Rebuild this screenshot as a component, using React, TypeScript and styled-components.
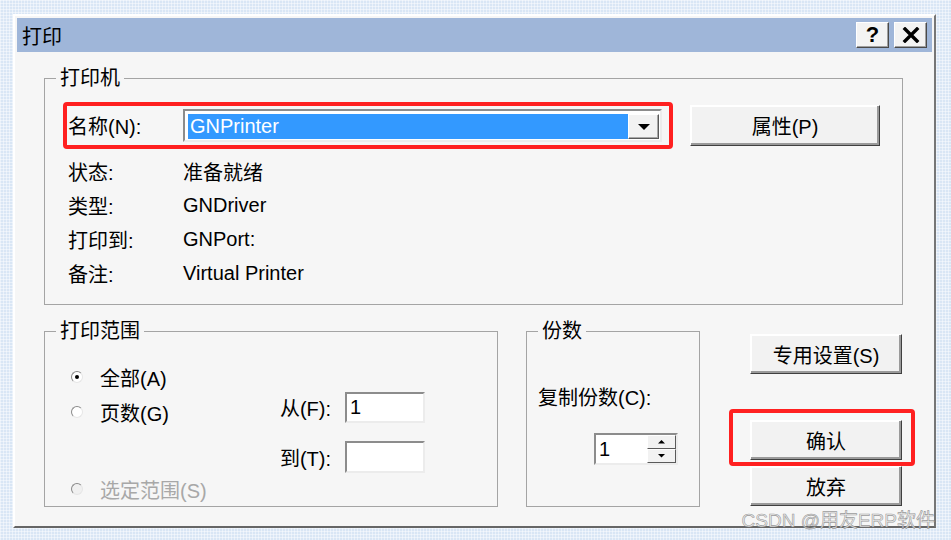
import React from "react";
import styled, { createGlobalStyle } from "styled-components";

const GlobalStyle = createGlobalStyle`
  html, body { margin: 0; padding: 0; }
  body {
    width: 951px;
    height: 540px;
    overflow: hidden;
    background-color: #d9e6f5;
    background-image:
      linear-gradient(rgba(255,255,255,0.45) 1px, transparent 1px),
      linear-gradient(90deg, rgba(255,255,255,0.45) 1px, transparent 1px);
    background-size: 3px 3px;
    font-family: "Liberation Sans", "Noto Sans CJK SC", sans-serif;
    color: #111;
  }
`;

const Page = styled.div`
  position: relative;
  width: 951px;
  height: 540px;
  box-sizing: border-box;
  padding: 14px 0 0 13px;
`;

const Dialog = styled.div`
  width: 923px;
  height: 514px;
  box-sizing: border-box;
  background: #f6f6f6;
  border: 2px solid;
  border-color: #ffffff #767676 #666666 #ffffff;
  padding: 2px;
  display: flex;
  flex-direction: column;
`;

const TitleBar = styled.div`
  height: 34px;
  flex: none;
  background: #9fb6d9;
  display: flex;
  align-items: center;
  gap: 5px;
  padding: 0 5px;
`;

const Title = styled.div`
  flex: 1;
  font-size: 20px;
  color: #000;
`;

const CaptionButton = styled.div`
  width: 33px;
  height: 26px;
  box-sizing: border-box;
  background: #f3f3f3;
  border: 1px solid;
  border-color: #ffffff #4a4a4a #4a4a4a #ffffff;
  box-shadow: inset -1px -1px 0 #a0a0a0;
  display: flex;
  align-items: center;
  justify-content: center;
  font-family: "Liberation Sans", sans-serif;
  font-weight: bold;
  font-size: 22px;
  color: #000;
`;

const Content = styled.div`
  flex: 1;
  display: flex;
  flex-direction: column;
  gap: 14px;
  padding: 14px 29px 0 27px;
`;

const Group = styled.fieldset<{ $width?: number; $height?: number }>`
  margin: 0;
  padding: 0;
  min-width: 0;
  border: 1px solid #a4a4a4;
  box-sizing: border-box;
  ${(p) => (p.$width ? `width: ${p.$width}px; flex: none;` : "")}
  ${(p) => (p.$height ? `height: ${p.$height}px;` : "")}
`;

const Legend = styled.legend`
  margin-left: 11px;
  padding: 0 4px;
  font-size: 20px;
  line-height: 24px;
  color: #000;
`;

const PrinterBody = styled.div`
  padding: 12px 18px 14px 18px;
`;

const NameRow = styled.div`
  display: flex;
  align-items: center;
  gap: 17px;
`;

const RedFrame = styled.div`
  width: 610px;
  height: 47px;
  box-sizing: border-box;
  border: 4px solid #ff2020;
  border-radius: 4px;
  display: flex;
  align-items: center;
  padding-left: 1px;
`;

const FieldLabel = styled.div<{ $width?: number }>`
  font-size: 20px;
  color: #000;
  white-space: nowrap;
  ${(p) => (p.$width ? `width: ${p.$width}px; flex: none;` : "")}
`;

const Combo = styled.div`
  width: 479px;
  height: 33px;
  box-sizing: border-box;
  border: 2px solid;
  border-color: #8c8c8c #ececec #ececec #8c8c8c;
  background: #ffffff;
  padding: 3px 1px 1px 3px;
  display: flex;
`;

const Selection = styled.div`
  flex: 1;
  background: #3399ff;
  color: #ffffff;
  font-size: 20px;
  line-height: 25px;
  padding-left: 2px;
`;

const DropButton = styled.div`
  width: 31px;
  box-sizing: border-box;
  background: #f2f2f2;
  border: 1px solid;
  border-color: #ffffff #5a5a5a #5a5a5a #ffffff;
  box-shadow: inset -1px -1px 0 #a8a8a8;
  display: flex;
  align-items: center;
  justify-content: center;
`;

const Button = styled.button<{ $width: number; $height?: number }>`
  width: ${(p) => p.$width}px;
  height: ${(p) => p.$height ?? 40}px;
  flex: none;
  box-sizing: border-box;
  background: #f2f2f2;
  border: 1px solid;
  border-color: #ffffff #404040 #404040 #ffffff;
  box-shadow: inset -2px -2px 0 #9a9a9a, inset 1px 1px 0 #ffffff;
  font-family: inherit;
  font-size: 20px;
  color: #000;
  padding: 0;
  display: flex;
  align-items: center;
  justify-content: center;
`;

const InfoGrid = styled.div`
  margin: 5px 0 0 5px;
  display: grid;
  grid-template-columns: 115px 1fr;
  grid-auto-rows: 34px;
  align-items: center;
  font-size: 20px;
  color: #000;
`;

const BottomRow = styled.div`
  display: flex;
  align-items: flex-start;
`;

const RangeBody = styled.div`
  display: flex;
  padding: 19px 0 0 26px;
`;

const RadioColumn = styled.div`
  width: 198px;
  flex: none;
  display: flex;
  flex-direction: column;
`;

const RadioItem = styled.div<{ $top?: number; $disabled?: boolean }>`
  height: 30px;
  margin-top: ${(p) => p.$top ?? 0}px;
  display: flex;
  align-items: center;
  gap: 17px;
  font-size: 20px;
  color: ${(p) => (p.$disabled ? "#a8a8a8" : "#000")};
`;

const RadioCircle = styled.span<{ $checked?: boolean; $disabled?: boolean }>`
  width: 12px;
  height: 12px;
  flex: none;
  box-sizing: border-box;
  border-radius: 50%;
  border: 1px solid;
  border-color: #8a8a8a #e6e6e6 #e6e6e6 #8a8a8a;
  background: ${(p) => (p.$disabled ? "#f0f0f0" : "#ffffff")};
  display: flex;
  align-items: center;
  justify-content: center;
  &::after {
    content: "";
    width: 4px;
    height: 4px;
    border-radius: 50%;
    background: ${(p) => (p.$checked ? "#000" : "transparent")};
  }
`;

const PageGrid = styled.div`
  margin-top: 30px;
  display: grid;
  grid-template-columns: 62px 80px;
  grid-template-rows: 31px 32px;
  column-gap: 14px;
  row-gap: 18px;
  align-items: center;
  justify-items: end;
`;

const TextBox = styled.div<{ $width?: number }>`
  width: ${(p) => (p.$width ? `${p.$width}px` : "100%")};
  height: 100%;
  box-sizing: border-box;
  border: 2px solid;
  border-color: #8c8c8c #ececec #ececec #8c8c8c;
  background: #ffffff;
  font-size: 20px;
  line-height: 27px;
  padding-left: 3px;
  color: #000;
`;

const CopiesBody = styled.div`
  display: flex;
  flex-direction: column;
  padding: 39px 0 0 11px;
`;

const Spinner = styled.div`
  align-self: flex-end;
  margin: 22px 21px 0 0;
  width: 84px;
  height: 32px;
  box-sizing: border-box;
  border: 2px solid;
  border-color: #8c8c8c #ececec #ececec #8c8c8c;
  background: #ffffff;
  display: flex;
`;

const SpinValue = styled.div`
  flex: 1;
  font-size: 20px;
  line-height: 28px;
  padding-left: 3px;
  color: #000;
`;

const SpinButtons = styled.div`
  width: 29px;
  display: flex;
  flex-direction: column;
`;

const SpinButton = styled.div`
  flex: 1;
  box-sizing: border-box;
  background: #f2f2f2;
  border: 1px solid;
  border-color: #ffffff #5a5a5a #5a5a5a #ffffff;
  display: flex;
  align-items: center;
  justify-content: center;
`;

const ButtonColumn = styled.div`
  margin-left: 50px;
  width: 152px;
  display: flex;
  flex-direction: column;
`;

const ButtonSlot = styled.div<{ $top: number }>`
  position: relative;
  margin-top: ${(p) => p.$top}px;
`;

const HighlightFrame = styled.span`
  position: absolute;
  left: -21px;
  right: -13px;
  top: -11px;
  bottom: -6px;
  border: 4px solid #ff2020;
  border-radius: 4px;
  pointer-events: none;
`;

const Watermark = styled.div`
  position: absolute;
  right: 16px;
  bottom: 9px;
  font-size: 19px;
  line-height: 20px;
  color: rgba(235, 235, 235, 0.85);
  -webkit-text-stroke: 0.6px rgba(120, 120, 120, 0.75);
  white-space: nowrap;
`;

const Triangle = ({ dir, size }: { dir: "up" | "down"; size: number }) => (
  <svg width={size} height={size / 2} viewBox="0 0 10 5">
    {dir === "down" ? <polygon points="0,0 10,0 5,5" fill="#000" /> : <polygon points="0,5 10,5 5,0" fill="#000" />}
  </svg>
);

export default function App() {
  return (
    <>
      <GlobalStyle />
      <Page>
        <Dialog>
          <TitleBar>
            <Title>打印</Title>
            <CaptionButton>?</CaptionButton>
            <CaptionButton>
              <svg width="18" height="16" viewBox="0 0 18 16">
                <path d="M3 2 L15 14 M15 2 L3 14" stroke="#000" strokeWidth="3.4" strokeLinecap="square" />
              </svg>
            </CaptionButton>
          </TitleBar>
          <Content>
            <Group>
              <Legend>打印机</Legend>
              <PrinterBody>
                <NameRow>
                  <RedFrame>
                    <FieldLabel $width={115}>名称(N):</FieldLabel>
                    <Combo>
                      <Selection>GNPrinter</Selection>
                      <DropButton>
                        <Triangle dir="down" size={12} />
                      </DropButton>
                    </Combo>
                  </RedFrame>
                  <Button $width={190} $height={41}>属性(P)</Button>
                </NameRow>
                <InfoGrid>
                  <span>状态:</span>
                  <span>准备就绪</span>
                  <span>类型:</span>
                  <span>GNDriver</span>
                  <span>打印到:</span>
                  <span>GNPort:</span>
                  <span>备注:</span>
                  <span>Virtual Printer</span>
                </InfoGrid>
              </PrinterBody>
            </Group>
            <BottomRow>
              <Group $width={454} $height={188}>
                <Legend>打印范围</Legend>
                <RangeBody>
                  <RadioColumn>
                    <RadioItem>
                      <RadioCircle $checked />
                      全部(A)
                    </RadioItem>
                    <RadioItem $top={5}>
                      <RadioCircle />
                      页数(G)
                    </RadioItem>
                    <RadioItem $top={47} $disabled>
                      <RadioCircle $disabled />
                      选定范围(S)
                    </RadioItem>
                  </RadioColumn>
                  <PageGrid>
                    <FieldLabel>从(F):</FieldLabel>
                    <TextBox>1</TextBox>
                    <FieldLabel>到(T):</FieldLabel>
                    <TextBox />
                  </PageGrid>
                </RangeBody>
              </Group>
              <Group $width={174} $height={188} style={{ marginLeft: 28 }}>
                <Legend>份数</Legend>
                <CopiesBody>
                  <FieldLabel>复制份数(C):</FieldLabel>
                  <Spinner>
                    <SpinValue>1</SpinValue>
                    <SpinButtons>
                      <SpinButton>
                        <Triangle dir="up" size={7} />
                      </SpinButton>
                      <SpinButton>
                        <Triangle dir="down" size={7} />
                      </SpinButton>
                    </SpinButtons>
                  </Spinner>
                </CopiesBody>
              </Group>
              <ButtonColumn>
                <ButtonSlot $top={15}>
                  <Button $width={152}>专用设置(S)</Button>
                </ButtonSlot>
                <ButtonSlot $top={46}>
                  <Button $width={152}>确认</Button>
                  <HighlightFrame />
                </ButtonSlot>
                <ButtonSlot $top={6}>
                  <Button $width={152}>放弃</Button>
                </ButtonSlot>
              </ButtonColumn>
            </BottomRow>
          </Content>
        </Dialog>
        <Watermark>CSDN @用友ERP软件</Watermark>
      </Page>
    </>
  );
}
